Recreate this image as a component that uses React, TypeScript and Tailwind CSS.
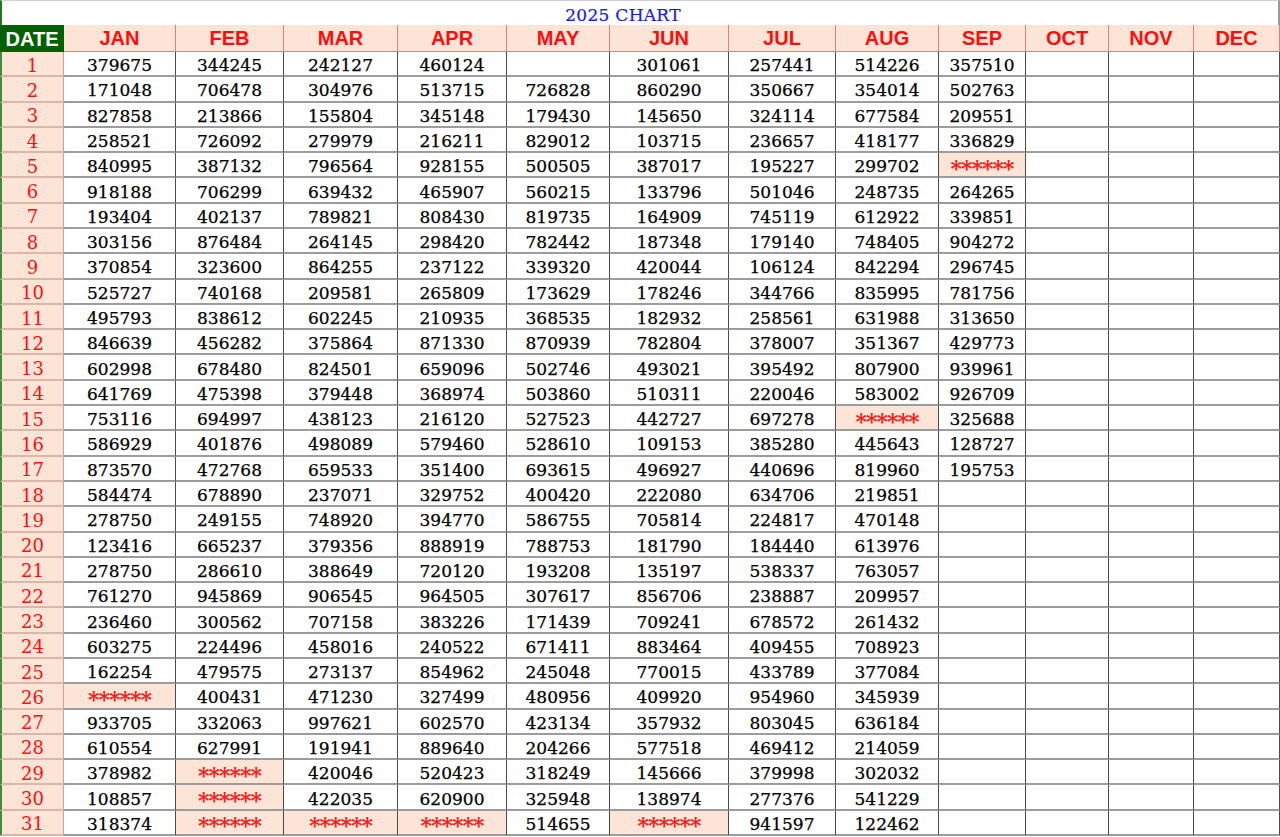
const S = "******";

const months = ["JAN", "FEB", "MAR", "APR", "MAY", "JUN", "JUL", "AUG", "SEP", "OCT", "NOV", "DEC"];

const data: string[][] = [
  ["379675","171048","827858","258521","840995","918188","193404","303156","370854","525727","495793","846639","602998","641769","753116","586929","873570","584474","278750","123416","278750","761270","236460","603275","162254",S,"933705","610554","378982","108857","318374"],
  ["344245","706478","213866","726092","387132","706299","402137","876484","323600","740168","838612","456282","678480","475398","694997","401876","472768","678890","249155","665237","286610","945869","300562","224496","479575","400431","332063","627991",S,S,S],
  ["242127","304976","155804","279979","796564","639432","789821","264145","864255","209581","602245","375864","824501","379448","438123","498089","659533","237071","748920","379356","388649","906545","707158","458016","273137","471230","997621","191941","420046","422035",S],
  ["460124","513715","345148","216211","928155","465907","808430","298420","237122","265809","210935","871330","659096","368974","216120","579460","351400","329752","394770","888919","720120","964505","383226","240522","854962","327499","602570","889640","520423","620900",S],
  ["","726828","179430","829012","500505","560215","819735","782442","339320","173629","368535","870939","502746","503860","527523","528610","693615","400420","586755","788753","193208","307617","171439","671411","245048","480956","423134","204266","318249","325948","514655"],
  ["301061","860290","145650","103715","387017","133796","164909","187348","420044","178246","182932","782804","493021","510311","442727","109153","496927","222080","705814","181790","135197","856706","709241","883464","770015","409920","357932","577518","145666","138974",S],
  ["257441","350667","324114","236657","195227","501046","745119","179140","106124","344766","258561","378007","395492","220046","697278","385280","440696","634706","224817","184440","538337","238887","678572","409455","433789","954960","803045","469412","379998","277376","941597"],
  ["514226","354014","677584","418177","299702","248735","612922","748405","842294","835995","631988","351367","807900","583002",S,"445643","819960","219851","470148","613976","763057","209957","261432","708923","377084","345939","636184","214059","302032","541229","122462"],
  ["357510","502763","209551","336829",S,"264265","339851","904272","296745","781756","313650","429773","939961","926709","325688","128727","195753"],
  [],
  [],
  [],
];

const serif = "font-['DejaVu_Serif','Liberation_Serif',serif]";
const sans = "font-['Liberation_Sans',Arial,sans-serif]";

function Cell({ value }: { value: string }) {
  const star = value === S;
  return (
    <div
      className={`flex items-center justify-center border-r border-b-2 border-r-[#4a4a4a] border-b-[#9c9c9c] ${serif} ${
        star ? "bg-[#fce4d6] text-[#ff1a1a] font-bold text-[22px] leading-[14px]" : "bg-white text-black text-[17px] leading-none [-webkit-text-stroke:0.25px_#000]"
      }`}
    >
      <span className={star ? "block h-[14px] translate-y-[3px] tracking-[-1px]" : "translate-y-[2px]"}>{value}</span>
    </div>
  );
}

export default function App() {
  const days = Array.from({ length: 31 }, (_, i) => i + 1);

  return (
    <div className="w-[1280px] h-[837px] bg-white">
      <div className="grid h-[836px] grid-cols-[64px_112px_108px_114px_109px_103px_119px_107px_103px_87px_83px_85px_86px] grid-rows-[25px_27px_repeat(31,minmax(0,1fr))]">
        <div className="col-span-full flex items-center justify-center border-t border-l-2 border-r-2 border-t-[#d0d0d0] border-l-[#1f7a1f] border-r-[#9a9a9a] bg-white">
          <span className={`mr-[34px] pt-[4px] text-[17px] leading-none text-[#1a1ae6] whitespace-pre tracking-[0.3px] [-webkit-text-stroke:0.2px_#1a1ae6] ${serif}`}>2025 CHART</span>
        </div>

        <div className={`flex items-center justify-center bg-[#006100] text-white font-bold text-[20px] leading-none ${sans}`}>DATE</div>
        {months.map((m) => (
          <div
            key={m}
            className={`flex items-center justify-center border-r border-b border-[#e08080] bg-[#fce4d6] text-[#ff0d0d] font-bold text-[20px] leading-none ${sans}`}
          >
            {m}
          </div>
        ))}

        {days.map((d) => (
          <div key={d} className="contents">
            <div
              className={`flex items-center justify-center border-l-2 border-l-[#3c8c3c] border-r border-b-2 border-r-[#c9a0a0] border-b-[#d9b8a8] bg-[#fce4d6] text-[#ff1010] text-[18px] leading-none ${serif}`}
            >
              <span className="translate-y-[2px]">{d}</span>
            </div>
            {months.map((m, mi) => (
              <Cell key={m} value={data[mi][d - 1] ?? ""} />
            ))}
          </div>
        ))}
      </div>
    </div>
  );
}
